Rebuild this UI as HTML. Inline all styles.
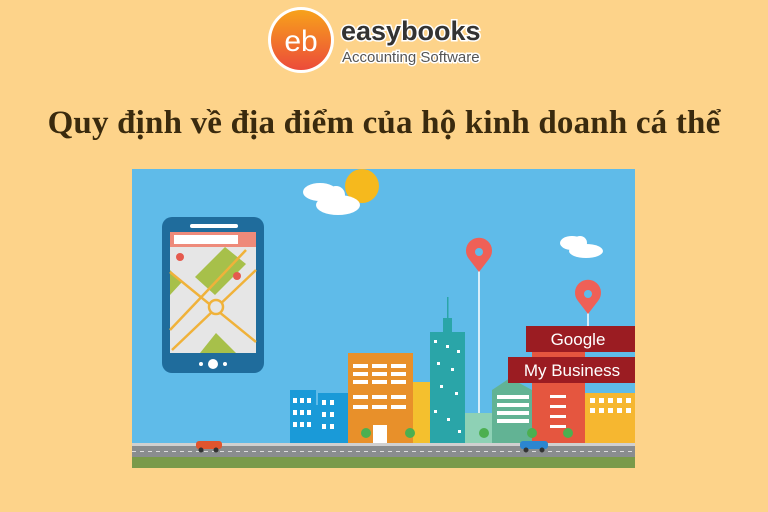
<!DOCTYPE html>
<html><head><meta charset="utf-8"><style>
html,body{margin:0;padding:0;width:768px;height:512px;overflow:hidden;background:#fdd38a;}
.t{position:absolute;left:0;width:768px;top:105px;text-align:center;font-family:"Liberation Serif","Noto Serif CJK SC",serif;font-weight:bold;font-size:33px;color:#3a2a0e;letter-spacing:0.2px;}
</style></head><body>
<svg width="768" height="512" style="position:absolute;left:0;top:0">
<circle cx="301" cy="40" r="33" fill="#fff"/>
<defs><linearGradient id="g" x1="0" y1="0" x2="0" y2="1"><stop offset="0" stop-color="#f7a21b"/><stop offset="1" stop-color="#ec4b3a"/></linearGradient></defs>
<circle cx="301" cy="40" r="30" fill="url(#g)"/>
<text x="301" y="51" text-anchor="middle" font-family="Liberation Sans,sans-serif" font-size="30" fill="#fff">eb</text>
<text x="341" y="40" font-family="Liberation Sans,sans-serif" font-weight="bold" font-size="27" fill="#333" stroke="#fff" stroke-width="3" paint-order="stroke">easybooks</text>
<text x="342" y="62" font-family="Liberation Sans,sans-serif" font-size="15" fill="#555" stroke="#fff" stroke-width="3" paint-order="stroke">Accounting Software</text>
<rect x="132" y="169" width="503" height="299" fill="#5fbbe9"/>
<circle cx="362" cy="186" r="17" fill="#f6b91d"/>
<g fill="#fff"><ellipse cx="320" cy="192" rx="17" ry="9"/><ellipse cx="338" cy="205" rx="22" ry="10"/><circle cx="336" cy="195" r="9"/></g>
<g fill="#fff"><ellipse cx="572" cy="243" rx="12" ry="7"/><ellipse cx="586" cy="251" rx="17" ry="7"/><circle cx="580" cy="243" r="7"/></g>
<rect x="162" y="217" width="102" height="156" rx="10" fill="#1f6c9c"/>
<rect x="190" y="224" width="48" height="4" rx="2" fill="#fff"/>
<rect x="170" y="232" width="86" height="121" fill="#e6e6e6"/>
<rect x="170" y="232" width="86" height="15" fill="#ee8a7a"/>
<rect x="174" y="235" width="64" height="9" fill="#fff"/>
<polygon points="225,247 246,264 215,295 195,277" fill="#a7c04a"/>
<polygon points="170,270 182,282 170,295" fill="#a7c04a"/>
<polygon points="200,353 216,333 236,353" fill="#a7c04a"/>
<g stroke="#f0b23a" stroke-width="2.5" fill="none"><line x1="170" y1="272" x2="256" y2="342"/><line x1="170" y1="330" x2="246" y2="250"/><line x1="172" y1="350" x2="256" y2="270"/><circle cx="216" cy="307" r="7" fill="#e6e6e6"/></g>
<circle cx="180" cy="257" r="4" fill="#e55a4e"/><circle cx="237" cy="276" r="4" fill="#e55a4e"/>
<circle cx="213" cy="364" r="5" fill="#fff"/><circle cx="201" cy="364" r="2" fill="#fff"/><circle cx="225" cy="364" r="2" fill="#fff"/>
<line x1="479" y1="260" x2="479" y2="413" stroke="#fff" stroke-width="1.5"/>
<path d="M479 272 L469 259 A13 13 0 1 1 489 259 Z" fill="#ef6057"/><circle cx="479" cy="252" r="4" fill="#5fbbe9"/>
<line x1="588" y1="305" x2="588" y2="330" stroke="#fff" stroke-width="1.5"/>
<path d="M588 314 L578 301 A13 13 0 1 1 598 301 Z" fill="#ef6057"/><circle cx="588" cy="294" r="4" fill="#5fbbe9"/>
<rect x="290" y="390" width="26" height="53" fill="#1a9ad8"/><rect x="318" y="393" width="30" height="50" fill="#1a9ad8"/><rect x="312" y="405" width="10" height="38" fill="#1a9ad8"/>
<g fill="#fff"><rect x="293" y="398" width="4" height="5"/><rect x="300" y="398" width="4" height="5"/><rect x="307" y="398" width="4" height="5"/><rect x="293" y="410" width="4" height="5"/><rect x="300" y="410" width="4" height="5"/><rect x="307" y="410" width="4" height="5"/><rect x="293" y="422" width="4" height="5"/><rect x="300" y="422" width="4" height="5"/><rect x="307" y="422" width="4" height="5"/><rect x="322" y="400" width="4" height="5"/><rect x="330" y="400" width="4" height="5"/><rect x="322" y="412" width="4" height="5"/><rect x="330" y="412" width="4" height="5"/><rect x="322" y="424" width="4" height="5"/><rect x="330" y="424" width="4" height="5"/></g>
<rect x="348" y="353" width="65" height="90" fill="#e8902a"/>
<g fill="#fff"><rect x="353" y="364" width="15" height="4"/><rect x="372" y="364" width="15" height="4"/><rect x="391" y="364" width="15" height="4"/><rect x="353" y="372" width="15" height="4"/><rect x="372" y="372" width="15" height="4"/><rect x="391" y="372" width="15" height="4"/><rect x="353" y="380" width="15" height="4"/><rect x="372" y="380" width="15" height="4"/><rect x="391" y="380" width="15" height="4"/><rect x="353" y="395" width="15" height="4"/><rect x="372" y="395" width="15" height="4"/><rect x="391" y="395" width="15" height="4"/><rect x="353" y="405" width="15" height="4"/><rect x="372" y="405" width="15" height="4"/><rect x="391" y="405" width="15" height="4"/><rect x="373" y="425" width="14" height="18"/></g>
<rect x="413" y="382" width="17" height="61" fill="#f4c02e"/>
<rect x="430" y="332" width="35" height="111" fill="#2aa5a8"/><rect x="443" y="318" width="9" height="14" fill="#2aa5a8"/><rect x="447" y="297" width="1.5" height="21" fill="#2aa5a8"/>
<g fill="#fff"><rect x="434" y="340" width="3" height="3"/><rect x="446" y="345" width="3" height="3"/><rect x="457" y="350" width="3" height="3"/><rect x="437" y="362" width="3" height="3"/><rect x="451" y="368" width="3" height="3"/><rect x="440" y="385" width="3" height="3"/><rect x="455" y="392" width="3" height="3"/><rect x="434" y="410" width="3" height="3"/><rect x="447" y="418" width="3" height="3"/><rect x="458" y="430" width="3" height="3"/></g>
<rect x="465" y="413" width="27" height="30" fill="#8ed1b5"/>
<path d="M492 443 V390 L510 378 L532 390 V443 Z" fill="#62b394"/>
<g fill="#fff"><rect x="497" y="395" width="32" height="4"/><rect x="497" y="403" width="32" height="4"/><rect x="497" y="411" width="32" height="4"/><rect x="497" y="419" width="32" height="4"/></g>
<rect x="532" y="352" width="53" height="91" fill="#e5563f"/>
<rect x="585" y="393" width="50" height="50" fill="#f6b730"/>
<g fill="#fff"><rect x="590" y="398" width="5" height="5"/><rect x="599" y="398" width="5" height="5"/><rect x="608" y="398" width="5" height="5"/><rect x="617" y="398" width="5" height="5"/><rect x="626" y="398" width="5" height="5"/><rect x="590" y="408" width="5" height="5"/><rect x="599" y="408" width="5" height="5"/><rect x="608" y="408" width="5" height="5"/><rect x="617" y="408" width="5" height="5"/><rect x="626" y="408" width="5" height="5"/><rect x="550" y="395" width="16" height="3"/><rect x="550" y="405" width="16" height="3"/><rect x="550" y="415" width="16" height="3"/><rect x="550" y="425" width="16" height="3"/></g>
<g fill="#4caf50"><circle cx="366" cy="433" r="5"/><circle cx="410" cy="433" r="5"/><circle cx="484" cy="433" r="5"/><circle cx="532" cy="433" r="5"/><circle cx="568" cy="433" r="5"/></g>
<rect x="526" y="326" width="109" height="26" fill="#9b1c22"/>
<rect x="508" y="357" width="127" height="26" fill="#9b1c22"/>
<text x="578" y="345" text-anchor="middle" font-family="Liberation Sans,sans-serif" font-size="17" fill="#fff">Google</text>
<text x="572" y="376" text-anchor="middle" font-family="Liberation Sans,sans-serif" font-size="17" fill="#fff">My Business</text>
<rect x="132" y="443" width="503" height="3" fill="#d0d0d0"/>
<rect x="132" y="446" width="503" height="11" fill="#8a8d8f"/>
<line x1="132" y1="451.5" x2="635" y2="451.5" stroke="#ddd" stroke-width="1" stroke-dasharray="4 4"/>
<rect x="132" y="457" width="503" height="11" fill="#7a9a4a"/>
<rect x="196" y="441" width="26" height="8" rx="3" fill="#e0552f"/><circle cx="201" cy="450" r="2.5" fill="#333"/><circle cx="216" cy="450" r="2.5" fill="#333"/>
<rect x="520" y="441" width="28" height="8" rx="3" fill="#2c86d0"/><circle cx="526" cy="450" r="2.5" fill="#333"/><circle cx="542" cy="450" r="2.5" fill="#333"/>
</svg>
<div class="t">Quy định về địa điểm của hộ kinh doanh cá thể</div>
</body></html>
